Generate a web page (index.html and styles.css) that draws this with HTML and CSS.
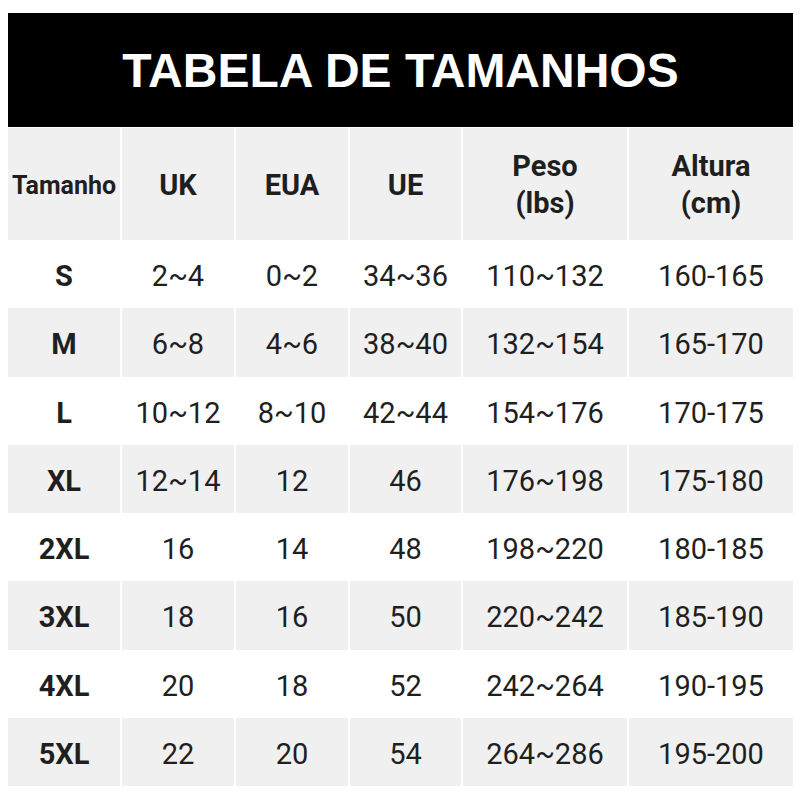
FILE: index.html
```html
<!DOCTYPE html>
<html lang="pt">
<head>
<meta charset="utf-8">
<title>Tabela de Tamanhos</title>
<link rel="stylesheet" href="styles.css">
</head>
<body>
<div class="page">
  <div class="title-bar"><h1 class="title">TABELA DE TAMANHOS</h1></div>
  <div class="size-table">
    <div class="cell head small">Tamanho</div>
    <div class="cell head">UK</div>
    <div class="cell head">EUA</div>
    <div class="cell head">UE</div>
    <div class="cell head">Peso<br>(lbs)</div>
    <div class="cell head">Altura<br>(cm)</div>

    <div class="cell size">S</div><div class="cell">2~4</div><div class="cell">0~2</div><div class="cell">34~36</div><div class="cell">110~132</div><div class="cell">160-165</div>

    <div class="cell size alt">M</div><div class="cell alt">6~8</div><div class="cell alt">4~6</div><div class="cell alt">38~40</div><div class="cell alt">132~154</div><div class="cell alt">165-170</div>

    <div class="cell size">L</div><div class="cell">10~12</div><div class="cell">8~10</div><div class="cell">42~44</div><div class="cell">154~176</div><div class="cell">170-175</div>

    <div class="cell size alt">XL</div><div class="cell alt">12~14</div><div class="cell alt">12</div><div class="cell alt">46</div><div class="cell alt">176~198</div><div class="cell alt">175-180</div>

    <div class="cell size">2XL</div><div class="cell">16</div><div class="cell">14</div><div class="cell">48</div><div class="cell">198~220</div><div class="cell">180-185</div>

    <div class="cell size alt">3XL</div><div class="cell alt">18</div><div class="cell alt">16</div><div class="cell alt">50</div><div class="cell alt">220~242</div><div class="cell alt">185-190</div>

    <div class="cell size">4XL</div><div class="cell">20</div><div class="cell">18</div><div class="cell">52</div><div class="cell">242~264</div><div class="cell">190-195</div>

    <div class="cell size alt">5XL</div><div class="cell alt">22</div><div class="cell alt">20</div><div class="cell alt">54</div><div class="cell alt">264~286</div><div class="cell alt">195-200</div>
  </div>
</div>
</body>
</html>
```

FILE: styles.css
```css
html, body {
  margin: 0;
  padding: 0;
  background: #ffffff;
}

.page {
  width: 785px;
  padding: 13px 7px 0 8px;
}

.title-bar {
  height: 114px;
  background: #000000;
  display: flex;
  align-items: center;
  justify-content: center;
}

.title {
  margin: 0;
  padding-top: 0;
  font-family: "Liberation Sans", Arial, sans-serif;
  font-weight: 700;
  font-size: 48px;
  color: #ffffff;
  letter-spacing: 0;
}

.size-table {
  margin-top: 1px;
  display: grid;
  grid-template-columns: 112px 112px 112px 111px 164px 164px;
  grid-template-rows: 112px repeat(8, 68.25px);
  column-gap: 2px;
  font-family: Roboto, "Noto Sans", sans-serif;
  color: #1f1f1f;
}

.cell {
  display: flex;
  align-items: center;
  justify-content: center;
  text-align: center;
  font-size: 29px;
  font-weight: 400;
  background: #ffffff;
  padding-top: 4px;
  box-sizing: border-box;
}

.head {
  background: #f0f0f0;
  font-weight: 700;
  line-height: 37px;
  padding-top: 2px;
}

.head.small {
  font-size: 25px;
}

.size {
  font-weight: 700;
}

.alt {
  background: #f0f0f0;
}
```
